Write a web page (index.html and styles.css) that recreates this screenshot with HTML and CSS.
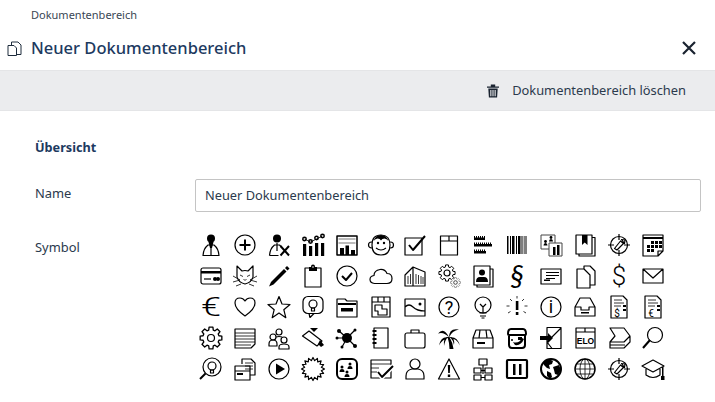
FILE: index.html
```html
<!DOCTYPE html>
<html lang="de">
<head>
<meta charset="utf-8">
<title>Neuer Dokumentenbereich</title>
<link rel="stylesheet" href="styles.css">
</head>
<body>
<svg class="defs" aria-hidden="true"><defs>
  <path id="gear" d="M-2.070-7.210L-1.740-9.850 1.740-9.850 2.070-7.210 3.630-6.560 5.730-8.190 8.190-5.730 6.560-3.630 7.210-2.070 9.850-1.740 9.850 1.740 7.210 2.070 6.560 3.630 8.190 5.730 5.730 8.190 3.630 6.560 2.070 7.210 1.740 9.850-1.740 9.850-2.070 7.210-3.630 6.560-5.730 8.190-8.190 5.730-6.560 3.630-7.210 2.070-9.850 1.740-9.850-1.740-7.210-2.070-6.560-3.630-8.190-5.730-5.730-8.190-3.630-6.560z"/>
  <g id="compass"><circle cx="12" cy="12" r="8.500"/><path d="M12 1v6M12 17v6M1 12h6M17 12h6"/><path class="f" d="M7.500 15.500l6-7.500 3 2.500-6.500 6.500zM14.500 6.500l3.500.5-.5 3.500z"/></g>
</defs></svg>
<div class="crumb">Dokumentenbereich</div>
<header class="head">
  <svg class="head-icon" viewBox="0 0 15 15"><path d="M1 4.500h6l2.500 2.500v7.500H1z" fill="#fff"/><path d="M4.500 4.500V1h6.500l3 3v9.500H9.500"/></svg>
  <h1 class="title">Neuer Dokumentenbereich</h1>
  <svg class="close" viewBox="0 0 14 14"><path d="M1 1l12 12M13 1L1 13"/></svg>
</header>
<div class="toolbar">
  <svg class="trash" viewBox="0 0 14 14"><path d="M1 2.500h12v1.200H1zM4.800 .5h4.400v2H4.800zM2.300 4.500h9.400l-.6 9H2.900zM4.300 6v6.300h1.100V6zM6.450 6v6.300h1.100V6zM8.600 6v6.300h1.100V6z" fill-rule="evenodd"/></svg>
  <span class="toolbar-label">Dokumentenbereich löschen</span>
</div>
<main class="content">
  <h2 class="section">Übersicht</h2>
  <div class="row row-name">
    <label class="label">Name</label>
    <div class="input">Neuer Dokumentenbereich</div>
  </div>
  <div class="row">
    <div class="label label-symbol">Symbol</div>
    <div class="icons">
      <!-- row 1 -->
      <svg class="ic" viewBox="0 0 24 24"><circle class="f" cx="12" cy="5.500" r="4"/><path d="M4 22.500q.5-7 5-10.500h6q4.500 3.500 5 10.500zM12 10v12"/><path class="f" d="M9.500 9h5L13 15h-2z"/></svg>
      <svg class="ic" viewBox="0 0 24 24"><circle cx="12" cy="12" r="10"/><path class="b" d="M12 6.500v11M6.500 12h11"/></svg>
      <svg class="ic" viewBox="0 0 24 24"><circle class="f" cx="10" cy="5.500" r="4"/><path d="M2.500 22.500q.5-7 5-10.500h5l2 2M2.500 22.500h9M10 10v8"/><path class="b" d="M13.500 13l8.500 9.500M22 13l-8.500 9.500"/></svg>
      <svg class="ic" viewBox="0 0 24 24"><path class="f" d="M2 11h3.200v12H2zM8 13h3.200v10H8zM14 10h3.200v13H14zM20 10h3.200v13H20z"/><path class="t" d="M3.500 6l6 3 6-3 6-3"/><circle class="m" cx="3.500" cy="6" r="1.700"/><circle class="m" cx="9.500" cy="8.500" r="1.700"/><circle class="m" cx="15.500" cy="5" r="1.700"/><circle class="m" cx="21.500" cy="3" r="1.700"/></svg>
      <svg class="ic" viewBox="0 0 24 24"><path class="m" d="M2 3h20v19H2z"/><path class="g" d="M3.500 6h17M3.500 10h17"/><path class="f" d="M5 15h4v7H5zM10.500 12.500h3.500V22h-3.500zM16 17h4v5h-4z"/></svg>
      <svg class="ic" viewBox="0 0 24 24"><circle cx="2.500" cy="12" r="3"/><circle cx="21.500" cy="12" r="3"/><path d="M12 2q9 0 9 10 0 10-9 10T3 12Q3 2 12 2z" fill="#fff"/><path class="f" d="M4.500 8q2-6 7.500-6t7.500 6q-2-2.500-4-2.500-2.500 0-3.500 2-1-2-3.500-2-2 0-4 2.500z"/><circle class="f" cx="9" cy="10" r="1.200"/><circle class="f" cx="15" cy="10" r="1.200"/><path d="M7 15q5 4 10 0"/></svg>
      <svg class="ic" viewBox="0 0 24 24"><path d="M2 5h17v17H2z"/><path class="b" d="M6 12l4 5L22 3"/></svg>
      <svg class="ic" viewBox="0 0 24 24"><path d="M3.500 3h17v19h-17zM3.500 8h17M12 3v5"/></svg>
      <svg class="ic" viewBox="0 0 24 24"><path class="f" d="M3 4.500h11V7H3zM3 11h18v2.500H3zM3 18h12v2.500H3z"/><path class="tk" d="M3 4h11M3 10.500h18M3 17.500h12"/></svg>
      <svg class="ic" viewBox="0 0 24 24"><path class="f" d="M2 3h1.500v18H2zM5 3h1v18H5zM7 3h2.500v18H7zM11 3h1v18h-1zM13 3h2.500v18H13zM16.500 3h1v18h-1z"/><path class="f o5" d="M18.500 3H22v18h-3.500z"/></svg>
      <svg class="ic" viewBox="0 0 24 24"><path class="gr" d="M2 2h14v14H2z"/><path class="f" d="M4.500 12.500q0-2.500 2-2.500t2 2.500zM10 8.500q0-2.500 2-2.500t2 2.500z"/><circle class="f" cx="6.500" cy="8.500" r="1.400"/><circle class="f" cx="12" cy="4.500" r="1.400"/><path class="g2" d="M10 10h13v13H10z"/><path class="f" d="M14 14h2.500v8H14zM18 12h2.500v10H18z"/><path class="gr" d="M10 10h13v13H10z"/></svg>
      <svg class="ic" viewBox="0 0 24 24"><path d="M3 2h16v19H3zM19 4.500h3V23H6v-2"/><path class="f" d="M9 2h5.500v10L11.700 9.500 9 12z"/></svg>
      <svg class="ic" viewBox="0 0 24 24"><use href="#compass"/></svg>
      <svg class="ic" viewBox="0 0 24 24"><path d="M2 2h20v16l-5 5H2zM17 23v-5h5"/><path class="b" d="M2 5h20"/><path class="f" d="M10 8h3v3h-3zM14 8h3v3h-3zM18 8h3v3h-3zM6 12h3v3H6zM10 12h3v3h-3zM14 12h3v3h-3zM18 12h3v3h-3zM6 16h3v3H6zM10 16h3v3h-3z"/></svg>
      <!-- row 2 -->
      <svg class="ic" viewBox="0 0 24 24"><rect x="2" y="4" width="20" height="16" rx="2"/><path class="f" d="M2 7h20v2.500H2z"/><path d="M5 15h7"/><circle class="f" cx="16" cy="15" r="2"/><circle class="f" cx="19" cy="15" r="2"/></svg>
      <svg class="ic" viewBox="0 0 24 24"><path d="M4 2l5 5q3-1 6 0l5-5v11q-1 5-8 7-7-2-8-7z"/><path class="t" d="M7 11l3 1.500M17 11l-3 1.500M10.500 15l1.500 1.500 1.500-1.500M0 12l7 4M0 18l7-2M24 12l-7 4M24 18l-7-2M3 22l5-2M21 22l-5-2"/></svg>
      <svg class="ic" viewBox="0 0 24 24"><path class="f" d="M2 22.500l2-4.500L17 5l2.500 2.500-13 13z"/><path class="f" d="M18 4l2-2 2.500 2.500-2 2z"/></svg>
      <svg class="ic" viewBox="0 0 24 24"><path d="M4 4h16v19H4z"/><path class="f" d="M8 3h8v4H8z"/><circle class="f" cx="12" cy="2.500" r="2"/><circle class="w" cx="12" cy="3" r=".8"/></svg>
      <svg class="ic" viewBox="0 0 24 24"><circle cx="12" cy="12" r="10"/><path class="b" d="M7 12l4 4 6-7"/></svg>
      <svg class="ic" viewBox="0 0 24 24"><path d="M5.500 19.500Q1 19 1 15.500q0-3.500 4-4 0-5 6-6 5-.5 7 4 5 0 5 5t-5 5z"/></svg>
      <svg class="ic" viewBox="0 0 24 24"><path d="M2 22V11l8-8 12 5v14zM10 3v19"/><path class="t" d="M5 12v8M7.500 10v10M13 10v10M15.500 11v9M18 12v8M20 13v7"/></svg>
      <svg class="ic" viewBox="0 0 24 24"><use href="#gear" transform="translate(10 9) scale(.82)"/><circle cx="10" cy="9" r="3"/><use class="gr" href="#gear" transform="translate(18.500 18.500) scale(.5)" fill="#fff"/><circle class="gr" cx="18.500" cy="18.500" r="1.800"/></svg>
      <svg class="ic" viewBox="0 0 24 24"><path d="M3 2h16v19H3zM19 5h3v18H6v-2"/><circle class="f" cx="11" cy="8.500" r="3"/><path class="f" d="M5 18q0-5 4-5h4q4 0 4 5z"/></svg>
      <svg class="ic" viewBox="0 0 24 24"><text class="glyph sect" x="12" y="21.500">§</text></svg>
      <svg class="ic" viewBox="0 0 24 24"><path d="M2 5h20v15H2z"/><path class="g3" d="M7 8.500h13M7 11.500h13M7 14.500h9"/><path class="f" d="M5 15.500h6V17H5z"/></svg>
      <svg class="ic" viewBox="0 0 24 24"><path d="M9 5h2V2h6l5 5v14h-5M4 5h7l6 6v13H4z"/></svg>
      <svg class="ic" viewBox="0 0 24 24"><text class="glyph dollar" x="12" y="21">$</text></svg>
      <svg class="ic" viewBox="0 0 24 24"><path d="M2 5h20v14H2zM2 5l10 9 10-9"/></svg>
      <!-- row 3 -->
      <svg class="ic" viewBox="0 0 24 24"><text class="glyph euro" x="12" y="21" textLength="20" lengthAdjust="spacingAndGlyphs">€</text></svg>
      <svg class="ic" viewBox="0 0 24 24"><path d="M12 21Q2 14 2 8q0-5 5-5 3 0 5 3 2-3 5-3 5 0 5 5 0 6-10 13z"/></svg>
      <svg class="ic" viewBox="0 0 24 24"><path d="M12 1.500l3 7.500 8 .5-6.200 5.200 2 8L12 18l-6.800 4.700 2-8L1 9.500l8-.5z"/></svg>
      <svg class="ic" viewBox="0 0 24 24"><rect x="2" y="1.500" width="20" height="17" rx="5"/><circle cx="12" cy="9" r="4"/><path d="M10.500 13h3v3h-3zM8 18.500l1 4 4-4"/></svg>
      <svg class="ic" viewBox="0 0 24 24"><path d="M2 22V4h8l2 2h10v16z"/><path class="b" d="M3 9h18"/><path class="f" d="M6 13h12v3.500H6z"/></svg>
      <svg class="ic" viewBox="0 0 24 24"><path d="M3 2h18v20H3zM3 7h18M9 2v5M15 2v5M6 10h7v4h5v6H9v-4H6z"/></svg>
      <svg class="ic" viewBox="0 0 24 24"><path d="M2 4h20v17H2zM2 12q4-4 8 0 4 4 12 4"/><circle class="f" cx="17" cy="9" r="1.500"/></svg>
      <svg class="ic" viewBox="0 0 24 24"><circle cx="12" cy="12" r="10"/><text class="glyph q" x="12" y="18.500">?</text></svg>
      <svg class="ic" viewBox="0 0 24 24"><circle cx="12" cy="10" r="8"/><path d="M9 9l3 3 3-3M12 12v6M8.500 18h7M9 21h6M10.500 23h3"/></svg>
      <svg class="ic" viewBox="0 0 24 24"><path class="f" d="M10.800 6h2.600v9h-2.600zM10.800 17h2.600v3h-2.600z"/><path class="t" d="M12 1v2.500M5 4l2 2M19 4l-2 2M1.500 11h3M19.500 11h3M3 18l2.500-1.500M21 18l-2.500-1.500"/></svg>
      <svg class="ic" viewBox="0 0 24 24"><circle cx="12" cy="12" r="10"/><text class="glyph i" x="12" y="18">i</text></svg>
      <svg class="ic" viewBox="0 0 24 24"><path d="M7 3h10l5 9v9H2v-9zM2 12h6v3h8v-3h6"/><path class="f" d="M8 17h8v1.500H8z"/></svg>
      <svg class="ic" viewBox="0 0 24 24"><path d="M4 1h12l4 4v18H4z"/><path class="t" d="M7 5h8M7 8h10M7 11h7"/><path class="f" d="M16 10h3v2h-3zM16 14h3v2h-3z"/><text class="glyph tiny" x="10" y="22">$</text></svg>
      <svg class="ic" viewBox="0 0 24 24"><path d="M4 1h12l4 4v18H4z"/><path class="t" d="M7 5h8M7 8h10M7 11h7"/><path class="f" d="M16 10h3v2h-3zM16 14h3v2h-3z"/><text class="glyph tiny" x="10" y="22">€</text></svg>
      <!-- row 4 -->
      <svg class="ic" viewBox="0 0 24 24"><use href="#gear" transform="translate(12 12) scale(1.100)"/><circle cx="12" cy="12" r="3.500"/></svg>
      <svg class="ic" viewBox="0 0 24 24"><path d="M2 3h20v15l-4 4H2z"/><path class="t" d="M2 7h20M2 10h20M2 13h20M2 16h20M2 19h16"/></svg>
      <svg class="ic" viewBox="0 0 24 24"><circle cx="12" cy="6" r="3"/><circle cx="6" cy="11" r="3"/><circle cx="17" cy="14" r="3"/><path d="M2 20v-2q0-4 4-4 4 0 4 4v2zM12 23v-2q0-3 5-3t5 3v2zM9 11q3-1 6 0"/></svg>
      <svg class="ic" viewBox="0 0 24 24"><path class="f" d="M9 2h8l-4 4z"/><path d="M1.500 10L8 5l13 10-5 5z"/><path class="f" d="M19 14l4 5-3 2-3-3z"/></svg>
      <svg class="ic" viewBox="0 0 24 24"><circle class="f" cx="12" cy="12" r="5"/><path d="M12 12L4 5M12 12l8-8M12 12H2M12 12l8 8M12 12l-5 9"/><circle class="f" cx="4" cy="5" r="2"/><circle class="f" cx="20" cy="4" r="1.500"/><circle class="f" cx="2" cy="12" r="1.500"/><circle class="f" cx="20" cy="20" r="2"/><circle class="f" cx="7" cy="21" r="1.500"/></svg>
      <svg class="ic" viewBox="0 0 24 24"><path d="M5 2h14v20H5z"/><path class="b" d="M3.500 5h4M3.500 9h4M3.500 13h4M3.500 17h4"/></svg>
      <svg class="ic" viewBox="0 0 24 24"><rect x="2" y="7" width="20" height="15" rx="2"/><path d="M8 7V4h8v3"/></svg>
      <svg class="ic" viewBox="0 0 24 24"><path class="f" d="M10.500 11q2 6 2 12h4q-1-7-4-12z"/><path class="f" d="M12 11.500Q7 .5 1 7.500q6-2 11 4zM12 11.500q0-10 10-8-7 1-10 8zM12 11.500q-8-2-10 8 3-6 10-8zM12 11.500q8-2 11 8-3-7-11-8zM11 11q-5 0-4 9 1-6 4-9zM13 11q5 0 4 8-1-5-4-8z"/></svg>
      <svg class="ic" viewBox="0 0 24 24"><path d="M2 12l3-8h14l3 8v10H2zM2 12h20M9 4l-1 8M15 4l1 8"/><path class="f" d="M6 16h8v2H6z"/></svg>
      <svg class="ic" viewBox="0 0 24 24"><path class="b" d="M3 8q0-5 3-5h12q3 0 3 5 0 1-1 1v10q0 3-3 3H7q-3 0-3-3V9q-1 0-1-1zM4 9h16"/><circle class="f" cx="7" cy="14" r="1"/><path class="f" d="M8 16q6 2 9-4l2 1q-3 7-9 6z"/><path class="f" d="M13 11h4v3h-4z"/></svg>
      <svg class="ic" viewBox="0 0 24 24"><path d="M8 1.500h14v21H8zM8 16L22 2M8 16l5 6.500"/><path class="f" d="M1 10h8V7l5 5-5 5v-3H1z"/></svg>
      <svg class="ic" viewBox="0 0 24 24"><path d="M3 2h19v20H3zM3 6h19M12 2v4"/><text class="elo" x="12.500" y="18">ELO</text></svg>
      <svg class="ic" viewBox="0 0 24 24"><path d="M3 2h14l6 8-6 6H3l5-6zM3 16v6h14l6-6v-6M3 19h15"/></svg>
      <svg class="ic" viewBox="0 0 24 24"><circle cx="14" cy="9" r="7.500"/><path class="b" d="M9 14l-7 8"/></svg>
      <!-- row 5 -->
      <svg class="ic" viewBox="0 0 24 24"><circle cx="13" cy="10" r="9"/><circle cx="13" cy="9" r="4"/><path d="M11.500 13h3v3h-3z"/><path class="b" d="M6.500 16.500L1 22"/></svg>
      <svg class="ic" viewBox="0 0 24 24"><path d="M9 7V2h9l4 4v12h-5M2 9h15v14H2zM2 14h15"/><path class="t" d="M12 6h8M12 9h8M12 12h8"/><path class="f" d="M4 16h6v2H4z"/></svg>
      <svg class="ic" viewBox="0 0 24 24"><circle cx="12" cy="12" r="10"/><path class="f" d="M9 6.500l9 5.500-9 5.500z"/></svg>
      <svg class="ic" viewBox="0 0 24 24"><path d="M23.500 12L20.340 13.660 22.600 16.400 19.060 16.730 20.130 20.130 16.730 19.060 16.400 22.600 13.660 20.340 12 23.500 10.340 20.340 7.600 22.600 7.270 19.060 3.870 20.130 4.940 16.730 1.400 16.400 3.660 13.660 .5 12 3.660 10.340 1.400 7.600 4.940 7.270 3.870 3.870 7.270 4.940 7.600 1.400 10.340 3.660 12 .5 13.660 3.660 16.400 1.400 16.730 4.940 20.130 3.870 19.060 7.270 22.600 7.600 20.340 10.340z"/></svg>
      <svg class="ic" viewBox="0 0 24 24"><rect class="b" x="2" y="2" width="20" height="20" rx="5"/><circle class="f" cx="15" cy="7" r="1.500"/><path class="f" d="M12.500 12q0-3 2.500-3t2.500 3z"/><circle class="f" cx="7" cy="10" r="1.500"/><path class="f" d="M4.500 15q0-3 2.500-3t2.500 3z"/><circle class="f" cx="12" cy="15" r="1.500"/><path class="f" d="M9.500 20q0-3 2.500-3t2.500 3z"/></svg>
      <svg class="ic" viewBox="0 0 24 24"><path d="M2 3h20v18H2z"/><path class="t" d="M2 7h20M2 11h8M2 15h6"/><path class="w2" d="M9 15l4 5L24 9"/><path class="b" d="M9 15l4 5L24 9"/></svg>
      <svg class="ic" viewBox="0 0 24 24"><circle cx="12" cy="7" r="5"/><path d="M3 22v-3q0-6 6-7h6q6 1 6 7v3z"/></svg>
      <svg class="ic" viewBox="0 0 24 24"><path d="M12 2l10.500 20h-21z"/><path class="f" d="M10.800 8h2.400l-.4 8h-1.600zM10.800 17.500h2.400V20h-2.400z"/></svg>
      <svg class="ic" viewBox="0 0 24 24"><path d="M8 2h8v6H8zM3 11h7v5H3zM14 11h7v5h-7zM3 18h7v5H3zM14 18h7v5h-7zM12 8v9M10 13.500h4M10 20.500h4"/></svg>
      <svg class="ic" viewBox="0 0 24 24"><rect class="b2" x="2" y="3" width="20" height="18" rx="1"/><path class="f" d="M8 7h2.500v11H8zM14 7h2.500v11H14z"/></svg>
      <svg class="ic" viewBox="0 0 24 24"><circle class="b" cx="12" cy="12" r="10"/><path class="f" d="M5 5l5-3 4 2-1 3-3 1 1 4-3-1-3-3zM14 10l6-2 2 5-3 5-3-1-1-4zM8 14l4 2 1 4-2 2-3-3z"/></svg>
      <svg class="ic" viewBox="0 0 24 24"><circle class="m" cx="12" cy="12" r="10"/><ellipse class="t" cx="12" cy="12" rx="5" ry="10"/><path class="t" d="M12 2v20M2 12h20M3.500 7h17M3.500 17h17"/></svg>
      <svg class="ic" viewBox="0 0 24 24"><use href="#compass"/></svg>
      <svg class="ic" viewBox="0 0 24 24"><path d="M12 3L1 9l11 6 11-6zM5 12v6q7 5 14 0v-6"/><path class="f" d="M21 10h1.500v9H21zM20 19h3.500v4H20z"/></svg>
    </div>
  </div>
</main>
</body>
</html>
```
FILE: styles.css
```css
* { box-sizing: border-box; }
html, body { margin: 0; padding: 0; }
body {
  width: 715px;
  height: 402px;
  overflow: hidden;
  background: #fff;
  font-family: "Noto Sans", "Open Sans", sans-serif;
  color: #2b3a4d;
}
.defs { display: block; width: 0; height: 0; }
.crumb {
  padding: 7px 0 0 31px;
  height: 23px;
  font-size: 11px;
  line-height: 15px;
  color: #3a4654;
}
.head {
  height: 47px;
  display: flex;
  align-items: center;
  padding: 3px 19px 0 7px;
  gap: 9px;
}
.head-icon {
  width: 15px;
  height: 15px;
  fill: none;
  stroke: #1f2d3d;
  stroke-width: 1;
}
.title {
  margin: 0;
  flex: 1;
  font-size: 16.500px;
  font-weight: 500;
  line-height: 22px;
  color: #1d3a5f;
}
.close {
  width: 14px;
  height: 14px;
  fill: none;
  stroke: #1a2330;
  stroke-width: 2.200;
}
.toolbar {
  height: 41px;
  background: #ebecee;
  border-top: 1px solid #e4e5e7;
  border-bottom: 1px solid #e4e5e7;
  display: flex;
  align-items: center;
  justify-content: flex-end;
  padding-right: 29px;
  gap: 12px;
}
.trash { width: 14px; height: 14px; fill: #1a2330; }
.toolbar-label { font-size: 12.870px; padding-bottom: 2px; color: #2b3a4d; }
.content { padding: 27px 14px 0 35px; }
.section {
  margin: 0;
  font-size: 12.700px;
  font-weight: 700;
  line-height: 18px;
  color: #1d3a5f;
}
.row { display: flex; }
.row-name { margin-top: 23px; align-items: flex-start; }
.label {
  width: 160px;
  flex: none;
  font-size: 12.900px;
  line-height: 18px;
  color: #2b3a4d;
}
.row-name .label { padding-top: 5px; }
.input {
  flex: 1;
  height: 33px;
  border: 1px solid #c4c4c4;
  border-radius: 2px;
  padding: 0 9px;
  font-size: 12.800px;
  line-height: 31px;
  color: #2b3a4d;
}
.row-name + .row { margin-top: 17px; }
.label-symbol { padding-top: 9px; }
.icons {
  display: grid;
  grid-template-columns: repeat(14, 34px);
  grid-auto-rows: 31px;
  margin-left: -1px;
  justify-items: center;
  align-items: center;
}
.ic {
  width: 24px;
  height: 24px;
  overflow: visible;
  fill: none;
  stroke: #000;
  stroke-width: 1.200;
  stroke-linejoin: round;
}
.ic .f { fill: #000; stroke: none; }
.ic .b { stroke-width: 2; }
.ic .m { stroke-width: 1.500; }
.ic .b2 { stroke-width: 2.200; }
.ic .t { stroke-width: .8; }
.ic .gr { stroke: #444; stroke-width: 1; }
.ic .g { stroke: #bbb; stroke-width: 2; }
.ic .g2 { fill: #fff; stroke: none; }
.ic .g3 { stroke-width: 1; }
.ic .tk { stroke-width: 2; stroke-dasharray: 1 1; }
.ic .o5 { opacity: .5; }
.ic .w { fill: #fff; stroke: none; }
.ic .w2 { stroke: #fff; stroke-width: 5; }
.glyph {
  fill: #000;
  stroke: none;
  text-anchor: middle;
  font-family: Roboto, "Liberation Sans", sans-serif;
}
.sect { font-size: 29px; font-style: italic; font-weight: 400; font-family: Lato, sans-serif; }
.dollar { font-size: 26px; font-weight: 300; }
.euro { font-size: 26px; font-weight: 300; }
.q { font-size: 18px; font-weight: 400; }
.i { font-size: 18px; font-weight: 400; }
.tiny { font-size: 10px; }
.elo {
  fill: #000;
  stroke: none;
  text-anchor: middle;
  font-family: "Liberation Sans", sans-serif;
  font-size: 8.500px;
  font-weight: 700;
}
```
